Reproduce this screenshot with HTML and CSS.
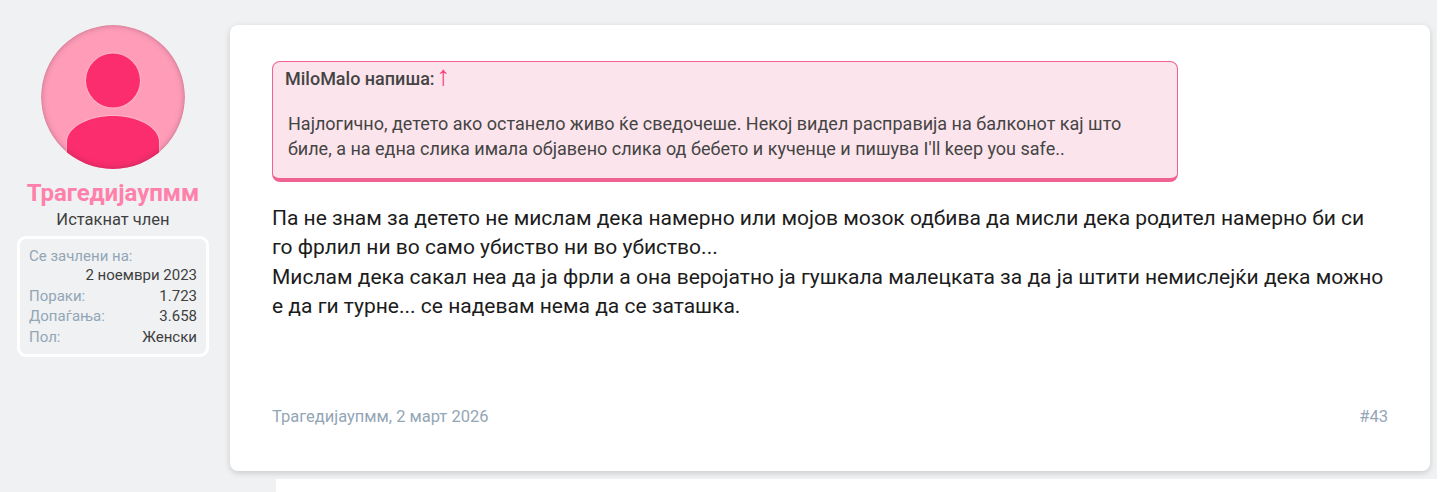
FILE: index.html
```html
<!DOCTYPE html>
<html lang="mk">
<head>
<meta charset="UTF-8">
<title>Трагедијаупмм</title>
<link rel="stylesheet" href="styles.css">
</head>
<body>
<div class="post">
    <div class="user">
        <div class="avatar">
            <svg viewBox="0 0 144 144" width="144" height="144">
                <circle cx="72" cy="72" r="72" fill="#ff9db9"/>
                <circle cx="72" cy="55.5" r="28" fill="#ffb3ca"/>
                <circle cx="72" cy="55.5" r="27" fill="#fb2d6e"/>
                <path d="M25 144V117C25 100 50 90 72 90S119 100 119 117V144Z" fill="#ffb3ca"/>
                <path d="M26 144V117C26 101 50 91 72 91S118 101 118 117V144Z" fill="#fb2d6e"/>
            </svg>
        </div>
        <div class="username">Трагедијаупмм</div>
        <div class="usertitle">Истакнат член</div>
        <div class="info">
            <div class="info-stack">
                <div class="label">Се зачлени на:</div>
                <div class="value">2 ноември 2023</div>
            </div>
            <div class="info-row"><span class="label">Пораки:</span><span class="value">1.723</span></div>
            <div class="info-row"><span class="label">Допаѓања:</span><span class="value">3.658</span></div>
            <div class="info-row"><span class="label">Пол:</span><span class="value">Женски</span></div>
        </div>
    </div>
    <div class="card">
        <div class="quote">
            <div class="quote-head">MiloMalo напиша:<span class="arrow">↑</span></div>
            <div class="quote-text">Најлогично, детето ако останело живо ќе сведочеше. Некој видел расправија на балконот кај што<br>биле, а на една слика имала објавено слика од бебето и кученце и пишува I'll keep you safe..</div>
        </div>
        <div class="message">
            Па не знам за детето не мислам дека намерно или мојов мозок одбива да мисли дека родител намерно би си<br>
            го фрлил ни во само убиство ни во убиство...<br>
            Мислам дека сакал неа да ја фрли а она веројатно ја гушкала малецката за да ја штити немислејќи дека можно<br>
            е да ги турне... се надевам нема да се заташка.
        </div>
        <div class="footer">
            <span>Трагедијаупмм, 2 март 2026</span>
            <span>#43</span>
        </div>
    </div>
</div>
<div class="next">
    <div class="next-side"></div>
</div>
</body>
</html>
```

FILE: styles.css
```css
html, body {
  margin: 0;
  height: 100%;
  overflow: hidden;
}

body {
  font-family: "Roboto", "Liberation Sans", sans-serif;
  background-color: #fff;
  color: #333;
}

.post {
  display: flex;
  width: 1437px;
  height: 479px;
  box-sizing: border-box;
  padding: 25px 7px 8px 17px;
  background-color: #eff1f3;
}

.user {
  width: 192px;
  margin-right: 21px;
  display: flex;
  flex-direction: column;
  align-items: center;
}

.avatar {
  width: 144px;
  height: 144px;
  border-radius: 50%;
  overflow: hidden;
  position: relative;
}

.avatar svg {
  display: block;
}

.avatar::after {
  content: "";
  position: absolute;
  inset: 0;
  border-radius: 50%;
  box-shadow: inset 0 0 6px rgba(90, 40, 60, 0.4);
}

.username {
  margin-top: 10px;
  font-size: 24px;
  line-height: 28px;
  font-weight: 700;
  color: #ff81ab;
}

.usertitle {
  margin-top: 1px;
  font-size: 16.5px;
  line-height: 23px;
  color: #3f3f3f;
}

.info {
  width: 100%;
  box-sizing: border-box;
  margin-top: 5px;
  padding: 9px 9px 7px;
  border: 3px solid #fff;
  border-radius: 9px;
  font-size: 15px;
  line-height: 20.5px;
}

.info-stack .label {
  line-height: 17px;
}

.info-stack .value {
  text-align: right;
}

.info-row {
  display: flex;
  justify-content: space-between;
}

.label {
  color: #93a6b6;
}

.value {
  color: #3f3f3f;
}

.card {
  flex: 1;
  box-sizing: border-box;
  display: flex;
  flex-direction: column;
  padding: 36px 42px 44px;
  background-color: #fff;
  border-radius: 8px;
  box-shadow: 0 2px 6px rgba(0, 0, 0, 0.16);
}

.quote {
  width: 906px;
  box-sizing: border-box;
  height: 121px;
  padding: 4px 12px;
  background-color: #fce4ec;
  border: 1px solid #f06292;
  border-bottom-width: 4px;
  border-radius: 8px;
  color: #444;
}

.quote-head {
  font-size: 18px;
  line-height: 24px;
  font-weight: 500;
}

.arrow {
  margin-left: 2px;
  font-family: "Liberation Sans", sans-serif;
  color: #fb3f78;
  font-size: 28px;
  line-height: 20px;
  font-weight: 400;
}

.quote-text {
  margin: 20px 0 0 3px;
  font-size: 18px;
  line-height: 25px;
}

.message {
  margin-top: 22px;
  font-size: 21px;
  line-height: 29.3px;
  color: #1c1c1c;
}

.footer {
  margin-top: auto;
  display: flex;
  justify-content: space-between;
  font-size: 16.5px;
  line-height: 20px;
  color: #93a6b6;
}

.next {
  height: 13px;
}

.next-side {
  width: 276px;
  height: 100%;
  background-color: #eff1f3;
}
```
